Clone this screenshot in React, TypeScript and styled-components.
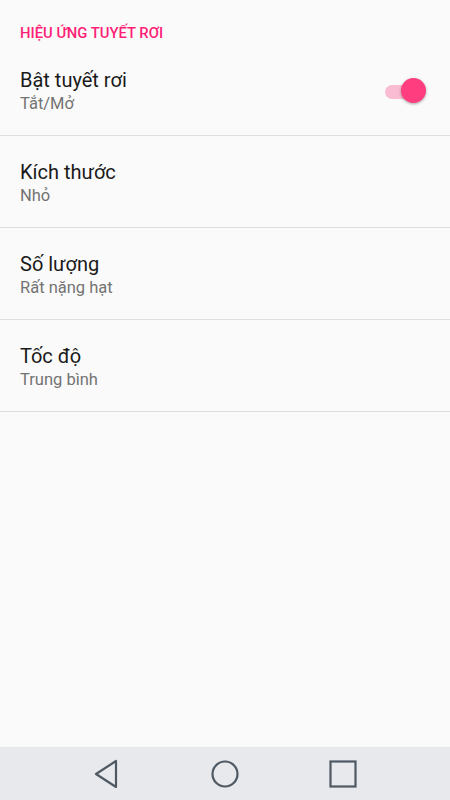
import React from "react";
import styled, { createGlobalStyle } from "styled-components";

const Global = createGlobalStyle`
  html, body { margin: 0; padding: 0; background: #fafafa; }
  body { font-family: Roboto, "Noto Sans", sans-serif; }
`;

const Screen = styled.div`
  display: flex;
  flex-direction: column;
  height: 800px;
  width: 450px;
  background: #fafafa;
`;

const Content = styled.div`
  flex: 1;
  display: flex;
  flex-direction: column;
`;

const Header = styled.div`
  height: 44px;
  box-sizing: border-box;
  padding: 24px 20px 0;
  font-size: 14.8px;
  line-height: 18px;
  font-weight: 500;
  color: #ff1f77;
`;

const Row = styled.div`
  height: 92px;
  box-sizing: border-box;
  border-bottom: 1px solid #dedede;
  display: flex;
  align-items: center;
  padding: 4px 24px 0 20px;
`;

const Texts = styled.div`
  flex: 1;
  display: flex;
  flex-direction: column;
`;

const Title = styled.div`
  font-size: 20px;
  line-height: 24px;
  color: #1a1a1a;
`;

const Subtitle = styled.div`
  font-size: 16.5px;
  line-height: 24px;
  color: #737373;
`;

const Switch = styled.div`
  position: relative;
  width: 42px;
  height: 24px;
  display: flex;
  align-items: center;
`;

const Track = styled.div`
  width: 36px;
  height: 14px;
  border-radius: 7px;
  background: #f9bcd3;
  margin-left: 1px;
`;

const Thumb = styled.div`
  position: absolute;
  right: 0;
  top: -2px;
  width: 25px;
  height: 25px;
  border-radius: 50%;
  background: #ff3d7f;
  box-shadow: 0 1px 3px rgba(0, 0, 0, 0.35);
`;

const NavBar = styled.div`
  height: 53px;
  background: #e8e9ec;
  display: flex;
  align-items: center;
  justify-content: center;
`;

const NavSlot = styled.div`
  width: 118px;
  display: flex;
  justify-content: center;
  align-items: center;
`;

const items = [
  { title: "Bật tuyết rơi", sub: "Tắt/Mở", toggle: true },
  { title: "Kích thước", sub: "Nhỏ" },
  { title: "Số lượng", sub: "Rất nặng hạt" },
  { title: "Tốc độ", sub: "Trung bình" },
];

export default function App() {
  return (
    <Screen>
      <Global />
      <Content>
        <Header>HIỆU ỨNG TUYẾT RƠI</Header>
        {items.map((it) => (
          <Row key={it.title}>
            <Texts>
              <Title>{it.title}</Title>
              <Subtitle>{it.sub}</Subtitle>
            </Texts>
            {it.toggle && (
              <Switch>
                <Track />
                <Thumb />
              </Switch>
            )}
          </Row>
        ))}
      </Content>
      <NavBar>
        <NavSlot>
          <svg width="28" height="30" viewBox="0 0 28 30">
            <path d="M23 2 L23 28 L3 15 Z" fill="none" stroke="#4e5964" strokeWidth="2.2" strokeLinejoin="round" />
          </svg>
        </NavSlot>
        <NavSlot>
          <svg width="30" height="30" viewBox="0 0 30 30">
            <circle cx="15" cy="15" r="12.5" fill="none" stroke="#4e5964" strokeWidth="2.2" />
          </svg>
        </NavSlot>
        <NavSlot>
          <svg width="30" height="30" viewBox="0 0 30 30">
            <rect x="2.5" y="2.5" width="25" height="25" fill="none" stroke="#4e5964" strokeWidth="2.2" />
          </svg>
        </NavSlot>
      </NavBar>
    </Screen>
  );
}
